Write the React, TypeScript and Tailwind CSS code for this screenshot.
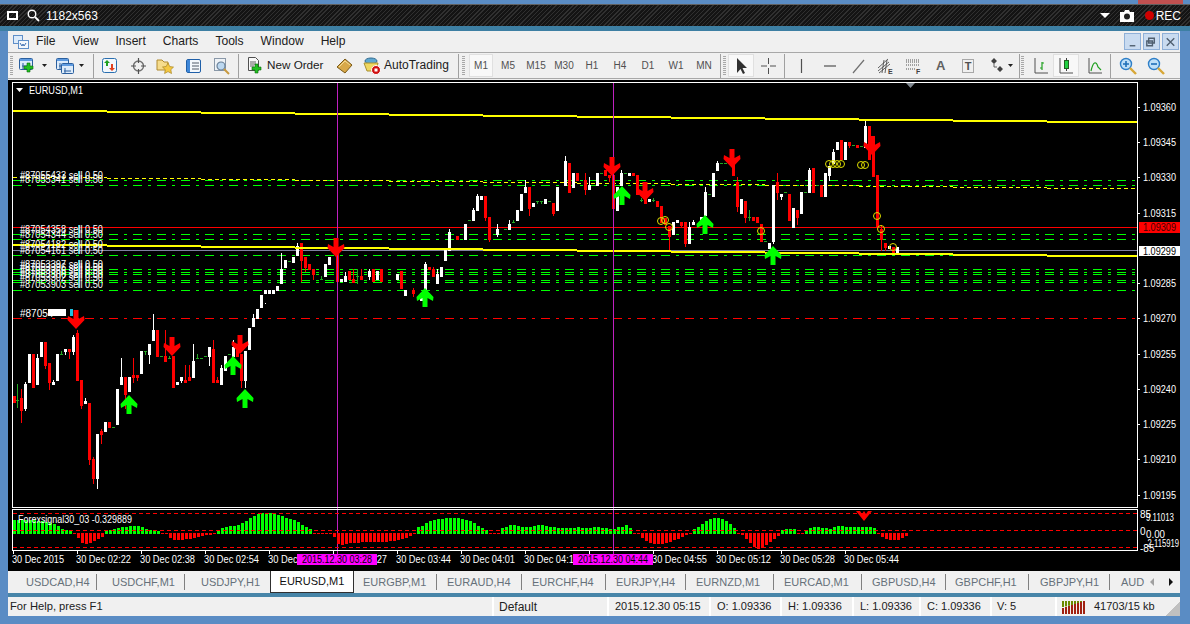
import type { ReactNode } from "react";

type Candle = [number, "w" | "r" | "g", number, number, number, number];

// zoomed coords per chart stretch: [x*3, colour, wickTop, bodyTop, bodyBottom, wickBottom]
const STRETCH_A: Candle[] = [
  [42, "r", 288, 288, 310, 310], [52, "g", 252, 301, 303, 325], [64, "r", 267, 294, 333, 369], [76, "w", 247, 252, 328, 332],
  [88, "w", 162, 162, 249, 249], [100, "r", 162, 162, 264, 264], [112, "w", 162, 174, 255, 255], [124, "w", 126, 126, 171, 171],
  [136, "r", 126, 126, 198, 207], [148, "r", 189, 189, 249, 270], [160, "w", 240, 246, 255, 255], [172, "w", 162, 162, 243, 243],
  [184, "g", 153, 163, 165, 165], [196, "w", 147, 147, 156, 165], [208, "r", 147, 147, 156, 177], [220, "w", 105, 111, 156, 165],
  [232, "r", 90, 99, 243, 243], [244, "r", 240, 240, 318, 327], [256, "w", 294, 303, 312, 312], [268, "r", 309, 309, 480, 495],
  [280, "r", 471, 477, 537, 552], [292, "w", 402, 402, 537, 567], [304, "r", 387, 393, 405, 432], [316, "w", 366, 366, 396, 396],
  [328, "r", 366, 366, 384, 384], [340, "g", 381, 381, 383, 383], [352, "w", 267, 267, 375, 375], [364, "w", 174, 231, 255, 255],
  [376, "r", 231, 231, 285, 327], [388, "w", 231, 231, 276, 276], [400, "r", 174, 225, 234, 249], [412, "r", 225, 225, 234, 243],
  [424, "w", 153, 153, 222, 222], [436, "g", 153, 153, 155, 165], [448, "w", 132, 132, 165, 192], [460, "w", 42, 90, 123, 123],
  [472, "r", 90, 90, 171, 171], [484, "g", 168, 168, 170, 170], [496, "r", 90, 168, 186, 186], [508, "g", 168, 175, 177, 177],
  [520, "r", 168, 168, 264, 264], [532, "w", 246, 246, 255, 255], [544, "w", 231, 231, 243, 249], [556, "r", 195, 240, 249, 249],
  [568, "r", 195, 231, 243, 243], [580, "w", 132, 183, 234, 234], [592, "g", 162, 175, 177, 177], [604, "g", 174, 174, 176, 176],
  [616, "g", 168, 168, 170, 170], [628, "w", 141, 141, 171, 198], [640, "r", 120, 147, 249, 249], [652, "r", 231, 240, 249, 249],
  [664, "w", 195, 204, 255, 255], [676, "w", 168, 168, 213, 213], [688, "g", 162, 162, 164, 164], [700, "w", 120, 141, 171, 171],
  [712, "r", 141, 141, 171, 171], [724, "r", 162, 162, 243, 264], [736, "w", 153, 153, 243, 264], [748, "w", 84, 84, 150, 150],
  [760, "w", 42, 54, 81, 81], [772, "w", 27, 27, 57, 57], [784, "w", -15, -15, 24, 24], [796, "w", 9, -30, -18, 9],
];

const STRETCH_B: Candle[] = [
  [808, "w", 570, 570, 582, 582], [820, "w", 570, 570, 582, 582], [832, "w", 558, 558, 573, 573], [844, "w", 460, 507, 552, 552],
  [856, "w", 480, 480, 505, 505], [868, "g", 483, 483, 485, 485], [880, "w", 471, 471, 489, 489], [892, "w", 430, 438, 468, 468],
  [904, "r", 429, 429, 483, 546], [916, "r", 471, 471, 504, 516], [928, "r", 492, 492, 509, 509], [940, "r", 507, 507, 525, 540],
  [964, "g", 528, 538, 540, 540], [976, "w", 492, 492, 531, 531], [988, "w", 471, 471, 495, 495], [1012, "r", 450, 450, 546, 546],
  [1024, "w", 537, 537, 546, 546], [1036, "w", 516, 528, 546, 546], [1048, "r", 513, 513, 540, 540], [1060, "r", 507, 537, 549, 549],
  [1072, "g", 507, 528, 530, 552], [1084, "r", 507, 528, 540, 540], [1108, "w", 507, 513, 531, 540], [1120, "r", 507, 507, 546, 546],
  [1132, "w", 513, 513, 540, 540], [1144, "r", 507, 507, 546, 546], [1192, "w", 522, 522, 540, 540],
];

const STRETCH_C: Candle[] = [
  [3, "r", 424, 424, 477, 477], [15, "w", 480, 480, 498, 498], [39, "r", 474, 480, 492, 500], [63, "w", 489, 489, 513, 513],
  [75, "w", 396, 402, 483, 483], [87, "r", 411, 411, 420, 420], [99, "r", 411, 417, 441, 441], [111, "w", 417, 432, 462, 462],
  [123, "w", 411, 411, 441, 441], [135, "w", 360, 360, 393, 393], [147, "w", 297, 306, 363, 363], [171, "r", 318, 318, 330, 330],
  [195, "w", 282, 282, 330, 330], [207, "g", 270, 270, 272, 272], [219, "w", 234, 240, 273, 273], [231, "w", 192, 198, 243, 243],
  [243, "w", 198, 198, 210, 210], [255, "r", 198, 198, 264, 273], [267, "r", 261, 261, 330, 336], [291, "w", 282, 297, 315, 321],
  [315, "g", 297, 297, 299, 299], [327, "w", 270, 282, 300, 300], [339, "g", 270, 277, 279, 279], [351, "w", 240, 240, 273, 273],
  [363, "w", 192, 192, 243, 243], [375, "w", 150, 171, 189, 189], [387, "r", 171, 171, 237, 258], [399, "w", 219, 219, 231, 231],
  [411, "g", 213, 213, 215, 222], [423, "g", 213, 213, 215, 222], [435, "w", 207, 207, 222, 222], [447, "g", 213, 213, 215, 215],
  [459, "r", 219, 219, 252, 258], [471, "w", 171, 171, 243, 243], [495, "w", 78, 93, 168, 168], [507, "r", 99, 99, 189, 189],
  [519, "w", 129, 129, 174, 174], [531, "r", 129, 129, 153, 153], [555, "r", 129, 150, 180, 195], [567, "w", 141, 165, 180, 180],
  [591, "w", 129, 129, 168, 168], [603, "g", 129, 129, 131, 131], [615, "r", 120, 120, 138, 138], [627, "r", 135, 135, 145, 156],
  [639, "r", 135, 135, 237, 258], [651, "w", 171, 171, 243, 243], [663, "w", 120, 129, 168, 168], [675, "g", 129, 129, 131, 131],
  [687, "w", 129, 129, 138, 138], [699, "r", 129, 129, 138, 138], [711, "r", 135, 135, 195, 195], [723, "g", 204, 210, 212, 216],
  [735, "r", 156, 156, 222, 222], [747, "w", 207, 207, 216, 216], [759, "g", 204, 210, 212, 216], [771, "r", 213, 213, 231, 231],
  [783, "r", 228, 228, 280, 280], [795, "r", 265, 265, 285, 285], [807, "r", 288, 288, 322, 363], [819, "w", 276, 276, 315, 315],
  [831, "w", 270, 270, 279, 279], [843, "r", 276, 276, 288, 291], [855, "r", 276, 276, 342, 351], [867, "w", 276, 291, 342, 342],
  [879, "w", 270, 276, 285, 285], [903, "w", 261, 261, 273, 273], [915, "w", 171, 186, 258, 258], [927, "g", 192, 192, 194, 194],
  [939, "w", 129, 129, 201, 201], [951, "w", 93, 99, 123, 123], [963, "g", 99, 99, 101, 101], [975, "g", 99, 99, 101, 101],
  [987, "g", 99, 99, 101, 101], [999, "r", 100, 100, 138, 138], [1011, "r", 141, 156, 231, 246], [1023, "w", 207, 207, 252, 252],
  [1035, "r", 213, 213, 264, 279], [1047, "g", 240, 260, 262, 273], [1059, "r", 261, 261, 273, 273], [1071, "r", 261, 261, 279, 279],
  [1083, "r", 282, 282, 336, 336], [1095, "g", 333, 333, 335, 335], [1107, "w", 339, 339, 357, 357], [1119, "w", 165, 165, 336, 342],
  [1131, "r", 129, 156, 189, 210], [1143, "w", 192, 192, 201, 210], [1155, "g", 186, 186, 188, 188], [1167, "r", 192, 192, 273, 273],
  [1179, "w", 234, 234, 294, 294], [1191, "r", 240, 240, 264, 285],
];

const STRETCH_D: Candle[] = [
  [9, "w", 324, 324, 384, 384], [21, "r", 330, 330, 354, 375], [33, "w", 276, 276, 342, 342], [45, "g", 276, 276, 278, 278],
  [57, "w", 204, 210, 279, 279], [69, "r", 204, 204, 279, 279], [81, "g", 255, 255, 257, 257], [93, "r", 255, 255, 291, 291],
  [105, "w", 219, 219, 291, 291], [117, "w", 198, 198, 228, 243], [129, "w", 147, 156, 192, 192], [141, "w", 126, 126, 150, 150],
  [153, "r", 120, 120, 180, 180], [165, "w", 126, 126, 180, 180], [177, "r", 126, 126, 138, 144], [189, "g", 135, 135, 137, 137],
  [201, "r", 135, 135, 144, 144], [213, "g", 138, 138, 140, 140], [225, "w", 60, 78, 144, 144], [237, "r", 78, 78, 180, 180],
  [249, "r", 108, 108, 231, 231], [261, "r", 225, 225, 381, 381], [273, "r", 375, 387, 420, 453], [285, "r", 429, 429, 444, 453],
  [297, "w", 438, 438, 447, 447], [309, "r", 441, 441, 462, 462], [321, "w", 441, 441, 462, 462],
];

const FILL = { w: "#ffffff", r: "#ff0000", g: "#22a822" };

const HIST = [
  11, 11, 11, 11, 11, 11, 10, 10, 9, 8, 7, 5, 2, 1, 0,
  -3, -8, -13, -14, -13, -11, -9, -7,
  0, 1, 2, 3, 4, 4, 5, 5, 5, 4, 2, 1, 0, 0,
  -1, -4, -8, -10, -10, -10, -9, -9, -8, -7, -6, -5, -5, -4,
  1, 3, 4, 5, 5, 6, 8, 10, 13, 15, 17, 18, 18, 18, 17, 16, 15, 13, 12, 11, 9, 6, 4, 2,
  -1, -1, -1, -1, -3, -7, -14, -15, -14, -13, -13, -13, -12, -12, -12, -12, -12, -12, -12, -11, -11, -10, -9, -8, -6, -4,
  4, 5, 8, 10, 11, 12, 12, 13, 13, 13, 13, 12, 11, 10, 8, 5, 3, 1,
  -1, -1, -1,
  3, 4, 6, 6, 5, 4, 4, 4, 5, 6, 6, 5, 4, 4, 3, 3, 3, 3, 3, 4, 3, 3, 3, 4, 4, 3, 3, 2, 2, 4, 4, 6, 3,
  -1, -4, -8, -11, -13, -14, -14, -14, -13, -12, -10, -9, -7, -5, -4,
  2, 4, 7, 10, 12, 13, 13, 12, 10, 7, 3,
  -2, -5, -9, -13, -17, -19, -18, -15, -12, -9, -6,
  1, 2, 2, 2, -1, -1,
  1, 3, 4, 4, 3, 3, 2, 4, 5, 5, 4, 4, 4, 4, 4, 4, 4, 3,
  -3, -7, -9, -10, -10, -10, -8, -6,
];

const GREEN_LINES = [180, 185, 234, 239, 250, 255, 269, 272, 274, 280, 282, 290];
const PRICES: [string, number][] = [
  ["1.09360", 107], ["1.09345", 142], ["1.09330", 177], ["1.09315", 213], ["1.09285", 283], ["1.09270", 318],
  ["1.09255", 354], ["1.09240", 389], ["1.09225", 424], ["1.09210", 459], ["1.09195", 495],
];
const ORDERS: [string, number][] = [
  ["#87055433", 175], ["#87055341", 179], ["#87054358", 229], ["#87054344", 234], ["#87054182", 244], ["#87054161", 250],
  ["#87053397", 264], ["#87053396", 267], ["#87053366", 270], ["#87053300", 274], ["#87053302", 277], ["#87053903", 284],
];
const TIMES: [string, number][] = [
  ["30 Dec 2015", 12], ["30 Dec 02:22", 76], ["30 Dec 02:38", 140], ["30 Dec 02:54", 204], ["30 Dec 03:11", 268],
  ["30 Dec 03:27", 332], ["30 Dec 03:44", 396], ["30 Dec 04:01", 460], ["30 Dec 04:18", 524], ["30 Dec 04:39", 588],
  ["30 Dec 04:55", 652], ["30 Dec 05:12", 716], ["30 Dec 05:28", 780], ["30 Dec 05:44", 844],
];
const DOWN: [number, number][] = [[76, 310], [172, 337], [240, 335], [336, 238], [612, 157], [645, 182], [732, 149], [872, 136]];
const UP: [number, number][] = [[129, 395], [233, 356], [245, 389], [425, 288], [622, 186], [705, 215], [773, 246]];
const RINGS: [number, number][] = [
  [661, 221], [665, 220], [669, 227], [761, 231], [829, 164], [833, 164], [837, 164], [841, 164],
  [861, 165], [865, 165], [877, 216], [881, 229], [893, 247],
];
const TABS: [string, string][] = [
  ["USDCAD,H4", "w-[87px] pl-[16px] border-r"],
  ["USDCHF,M1", "w-[88px] pl-[15px] border-r"],
  ["USDJPY,H1", "w-[85px] pl-[16px]"],
  ["EURGBP,M1", "w-[83px] pl-[9px] border-r"],
  ["EURAUD,H4", "w-[85px] pl-[10px] border-r"],
  ["EURCHF,H4", "w-[84px] pl-[10px] border-r"],
  ["EURJPY,H4", "w-[80px] pl-[10px] border-r"],
  ["EURNZD,M1", "w-[88px] pl-[10px] border-r"],
  ["EURCAD,M1", "w-[88px] pl-[10px] border-r"],
  ["GBPUSD,H4", "w-[84px] pl-[10px] border-r"],
  ["GBPCHF,H1", "w-[83px] pl-[9px] border-r"],
  ["GBPJPY,H1", "w-[81px] pl-[11px] border-r"],
];
const PERIODS = ["M5", "M15", "M30", "H1", "H4", "D1", "W1", "MN"];

function Candles({ rows, dx, dy }: { rows: Candle[]; dx: number; dy: number }) {
  return (
    <>
      {rows.map((c, i) => {
        const x = Math.round(dx + c[0] / 3 - 1.5);
        const y = (v: number) => Math.round(dy + v / 3);
        return (
          <g key={i} fill={FILL[c[1]]}>
            <rect x={x + 1} y={y(c[2])} width={1} height={Math.max(1, y(c[5]) - y(c[2]))} />
            <rect x={x} y={y(c[3])} width={3} height={Math.max(1, y(c[4]) - y(c[3]))} />
          </g>
        );
      })}
    </>
  );
}

function Steps({ y0, thick, color }: { y0: number; thick: number; color: string }) {
  return (
    <>
      {Array.from({ length: 12 }, (_, k) => {
        const x = 13 + 94 * k;
        return <rect key={k} x={x} y={y0 + k} width={Math.min(94, 1137 - x)} height={thick} fill={color} />;
      })}
    </>
  );
}

function Arrow({ x, y, down }: { x: number; y: number; down?: boolean }) {
  const s = down ? 1 : -1;
  const t = down ? y : y + 19;
  const p = (a: number, b: number) => `${x + a},${t + s * b}`;
  return (
    <polygon
      fill={down ? "#ff0000" : "#00ff00"}
      points={[p(-2.5, 0), p(2.5, 0), p(2.5, 9), p(8, 6), p(8.5, 10), p(0, 19), p(-8.5, 10), p(-8, 6), p(-2.5, 9)].join(" ")}
    />
  );
}

function ChartText({ x, y, children, len, fill = "#ffffff" }: { x: number; y: number; children: ReactNode; len?: number; fill?: string }) {
  return (
    <text x={x} y={y} fontSize={10} fill={fill} textLength={len} lengthAdjust={len ? "spacingAndGlyphs" : undefined} dominantBaseline="central">
      {children}
    </text>
  );
}

function Chart() {
  return (
    <svg viewBox="8 80 1172 491" className="block shrink-0 w-[1172px] h-[491px] bg-black" fontFamily="'Liberation Sans', sans-serif">
      <g shapeRendering="crispEdges">
        {GREEN_LINES.map((y) => (
          <line key={y} x1={13} x2={1137} y1={y + 0.5} y2={y + 0.5} stroke="#00ff00" strokeDasharray="9 6 3 6" />
        ))}
        <line x1={13} x2={1137} y1={227.5} y2={227.5} stroke="#ff0000" />
        <line x1={13} x2={1137} y1={250.5} y2={250.5} stroke="#8080a0" />
        <line x1={13} x2={1137} y1={318.5} y2={318.5} stroke="#ff0000" strokeDasharray="9 6 3 6" />
        {Array.from({ length: 12 }, (_, k) => (
          <line key={k} x1={13 + 94 * k} x2={Math.min(107 + 94 * k, 1137)} y1={177 + k} y2={177 + k} stroke="#ffff00" strokeDasharray="4 3" />
        ))}
        <Candles rows={STRETCH_A} dx={0} dy={300} />
        <Candles rows={STRETCH_B} dx={0} dy={100} />
        <Candles rows={STRETCH_C} dx={400} dy={130} />
        <Candles rows={STRETCH_D} dx={790} dy={100} />
        <Steps y0={110} thick={2} color="#ffff00" />
        <Steps y0={244} thick={2} color="#ffff00" />
        <line x1={337.5} x2={337.5} y1={83} y2={554} stroke="#c020c0" />
        <line x1={613.5} x2={613.5} y1={83} y2={554} stroke="#c020c0" />
      </g>

      {RINGS.map(([x, y], i) => (
        <circle key={i} cx={x} cy={y} r={3.5} fill="none" stroke="#e0e000" />
      ))}
      {DOWN.map(([x, y]) => <Arrow key={x} x={x} y={y} down />)}
      {UP.map(([x, y]) => <Arrow key={x} x={x} y={y} />)}

      {ORDERS.map(([id, y]) => (
        <g key={y}>
          <rect x={78} y={y - 4} width={1.5} height={8} fill="#20c0e0" />
          <ChartText x={20} y={y} len={83}>{id} sell 0.50</ChartText>
        </g>
      ))}
      <ChartText x={20} y={313}>#87054</ChartText>
      <rect x={48} y={309} width={18} height={7} fill="#ffffff" />
      <rect x={70} y={309} width={3} height={7} fill="#20c0e0" />

      <g shapeRendering="crispEdges" fill="none" stroke="#ffffff">
        <rect x={12.5} y={82.5} width={1125} height={425} />
        <rect x={12.5} y={509.5} width={1125} height={41} />
      </g>
      <polygon points="906,83 915,83 910.5,88" fill="#808890" />
      <polygon points="16,88 23,88 19.5,92" fill="#ffffff" />
      <ChartText x={29} y={90} len={54}>EURUSD,M1</ChartText>

      {PRICES.map(([p, y]) => (
        <g key={p}>
          <rect x={1137} y={y} width={3} height={1} fill="#ffffff" />
          <ChartText x={1143} y={y} len={33}>{p}</ChartText>
        </g>
      ))}
      <rect x={1139} y={222} width={41} height={11} fill="#ff0000" />
      <ChartText x={1143} y={227.5} len={33} fill="#400000">1.09309</ChartText>
      <rect x={1139} y={246} width={41} height={10} fill="#ffffff" />
      <ChartText x={1143} y={251} len={33} fill="#000000">1.09299</ChartText>

      <g shapeRendering="crispEdges">
        {HIST.map((h, i) => {
          const x = 13 + i * 4;
          return h >= 0 ? (
            <rect key={i} x={x} y={530.5 - h} width={3} height={h + 3} fill="#00ff00" />
          ) : (
            <rect key={i} x={x} y={533} width={3} height={Math.max(1, -h - 3)} fill="#ff0000" />
          );
        })}
        {[513.5, 530.5, 547.5].map((y) => (
          <line key={y} x1={13} x2={1137} y1={y} y2={y} stroke="#ff0000" strokeDasharray="4 3" />
        ))}
      </g>
      <polygon points="856,511 860,511 862,514 864,511 866,514 868,511 872,511 864,521" fill="#ff0000" />
      <ChartText x={18} y={519} len={114}>Forexsignal30_03 -0.329889</ChartText>
      <ChartText x={1140} y={514}>85</ChartText>
      <ChartText x={1146} y={517} len={28}>9.11013</ChartText>
      <ChartText x={1140} y={531}>0</ChartText>
      <ChartText x={1146} y={534} len={19}>0.00</ChartText>
      <ChartText x={1145} y={543} len={34}>-2.115919</ChartText>
      <ChartText x={1140} y={548}>-85</ChartText>

      <g shapeRendering="crispEdges" fill="#ffffff">
        {TIMES.map(([, x]) => <rect key={x} x={x + 1} y={551} width={1} height={3} />)}
      </g>
      {TIMES.map(([t, x]) => (
        <ChartText key={x} x={x} y={559} len={t.length === 11 ? 52 : 55}>{t}</ChartText>
      ))}
      <rect x={297} y={554} width={80} height={11} fill="#ff00ff" />
      <ChartText x={302} y={559.5} len={70} fill="#000000">2015.12.30 03:28</ChartText>
      <rect x={573} y={554} width={80} height={11} fill="#ff00ff" />
      <ChartText x={578} y={559.5} len={70} fill="#000000">2015.12.30 04:44</ChartText>
    </svg>
  );
}

/* toolbar icons */
const Ico = ({ children, w = 18 }: { children: ReactNode; w?: number }) => (
  <svg width={w} height={18} viewBox={`0 0 ${w} 18`} className="shrink-0 block">{children}</svg>
);

const Plus = ({ x, y }: { x: number; y: number }) => (
  <path d={`M${x} ${y}h3v3h3v3h-3v3h-3v-3h-3v-3h3z`} fill="#22c022" stroke="#0a6a0a" strokeWidth={0.6} />
);

const WinIco = ({ x, y, w, h }: { x: number; y: number; w: number; h: number }) => (
  <g>
    <rect x={x + 0.5} y={y + 0.5} width={w} height={h} rx={1} fill="#dcebfa" stroke="#2a5f9e" />
    <rect x={x + 1} y={y + 1} width={w - 1} height={2} fill="#5f9be0" />
    <path d={`M${x + 3} ${y + 8}h${w - 5}M${x + 4} ${y + 5}v6`} stroke="#2a5f9e" fill="none" />
  </g>
);

const NewChartIcon = () => <Ico><WinIco x={0} y={1} w={13} h={11} /><Plus x={8} y={6} /></Ico>;
const ProfileIcon = () => (
  <Ico><WinIco x={0} y={1} w={12} h={11} /><WinIco x={5} y={6} w={12} h={10} /></Ico>
);
const MarketIcon = () => (
  <Ico>
    <rect x={1.5} y={1.5} width={14} height={14} rx={2} fill="#f2f7fc" stroke="#2a6fb0" />
    <path d="M6 3l3 3H7v3H5V6H3z" fill="#20a020" />
    <path d="M11 14l-3-3h2V7h2v4h2z" fill="#e04020" />
  </Ico>
);
const TargetIcon = () => (
  <Ico>
    <circle cx={8.5} cy={9} r={5} fill="none" stroke="#707070" strokeWidth={1.4} />
    <path d="M8.5 1v5M8.5 12v5M1 9h5M11 9h5" stroke="#505050" strokeWidth={1.2} />
  </Ico>
);
const FolderStarIcon = () => (
  <Ico>
    <path d="M1 3h5l2 2h4v8H1z" fill="#f6dc8c" stroke="#b08a30" />
    <path d="M12 6l1.8 3.6 3.7.5-2.7 2.6.7 3.8-3.5-1.9-3.4 1.9.7-3.8L6.5 10l3.7-.5z" fill="#f4c842" stroke="#a88420" strokeWidth={0.7} />
  </Ico>
);
const TerminalIcon = () => (
  <Ico>
    <rect x={1.5} y={2.5} width={14} height={13} rx={1.5} fill="#f4f8fc" stroke="#1f5fa8" />
    <rect x={2} y={3} width={3} height={12} fill="#3f87d8" />
    <path d="M7 6h7M7 9h7M7 12h7" stroke="#505a68" />
  </Ico>
);
const TesterIcon = () => (
  <Ico>
    <rect x={1.5} y={1.5} width={11} height={12} fill="#eef2f6" stroke="#8a98a8" />
    <circle cx={8} cy={9} r={4} fill="#bcd8f0" stroke="#6a8098" strokeWidth={1.2} />
    <path d="M11 12l5 5" stroke="#c89a40" strokeWidth={2} />
  </Ico>
);
const NewOrderIcon = () => (
  <Ico>
    <path d="M1.5 .5h7l3 3v10h-10z" fill="#f8f8f8" stroke="#505050" />
    <path d="M3 5h6M3 7h6M3 9h4" stroke="#606060" />
    <Plus x={8} y={7} />
  </Ico>
);
const BookIcon = () => (
  <Ico>
    <path d="M1 10l8-8 7 6-7 8z" fill="#d8a848" stroke="#7a5a18" />
    <path d="M3 10l6-6 5 4" fill="none" stroke="#f4dc98" />
  </Ico>
);
const AutoIcon = () => (
  <Ico>
    <ellipse cx={8} cy={4} rx={6} ry={3} fill="#5fa8d0" stroke="#306a90" />
    <path d="M1 6h14l-2 8H4z" fill="#f0d860" stroke="#a89030" />
    <circle cx={13} cy={13} r={4.5} fill="#d01010" stroke="#ffffff" />
    <rect x={11.5} y={11.5} width={3} height={3} fill="#ffffff" />
  </Ico>
);
const CursorIcon = () => (
  <Ico><path d="M5 1v15l3.5-4 2.5 5 2-1-2.5-5H15z" fill="#303030" /></Ico>
);
const CrossIcon = () => <Ico><path d="M8.5 1v6M8.5 11v6M1 9h6M10 9h6" stroke="#505050" /></Ico>;
const VLineIcon = () => <Ico w={3}><path d="M1.5 2v14" stroke="#505050" strokeWidth={1.2} /></Ico>;
const HLineIcon = () => <Ico w={12}><path d="M0 9h12" stroke="#505050" strokeWidth={1.2} /></Ico>;
const DiagIcon = () => <Ico w={13}><path d="M1 16L12 3" stroke="#707070" strokeWidth={1.2} /></Ico>;
const ChannelIcon = () => (
  <Ico>
    <path d="M1 11L11 2M1 14L12 5M2 16L13 7M5 16L7 3M8 16L10 3" stroke="#505050" strokeWidth={0.9} fill="none" />
    <text x={11} y={17} fontSize={7} fontWeight={700} fill="#404040">E</text>
  </Ico>
);
const FibIcon = () => (
  <Ico>
    <path d="M1 3h13M1 5h13M1 8h13M1 12h9" stroke="#505050" strokeDasharray="1 1" />
    <text x={11} y={17} fontSize={7} fontWeight={700} fill="#404040">F</text>
  </Ico>
);
const TextBoxIcon = () => (
  <Ico w={14}>
    <rect x={1.5} y={2.5} width={11} height={13} fill="none" stroke="#606060" strokeDasharray="1 1" />
    <text x={7} y={13} fontSize={11} fontWeight={700} textAnchor="middle" fill="#505050">T</text>
  </Ico>
);
const SignsIcon = () => (
  <Ico w={14}>
    <path d="M4 1l3 3-3 3-3-3zM10 9l3 3-3 3-3-3z" fill="#404040" />
    <path d="M4 7v3h3" fill="none" stroke="#606060" />
  </Ico>
);
const Axes = () => <path d="M3 1v15h13" fill="none" stroke="#505050" />;
const BarsIcon = () => <Ico><Axes /><path d="M10 5v8M8 11h2M10 6h2" stroke="#20a020" strokeWidth={1.2} fill="none" /></Ico>;
const CandleIcon = () => (
  <Ico><Axes /><path d="M9.5 1v13" stroke="#404040" /><rect x={7.5} y={3.5} width={4} height={8} fill="#20d040" stroke="#206020" /></Ico>
);
const LineIcon = () => <Ico><Axes /><path d="M5 14c2-9 5-11 7-4l3 3" fill="none" stroke="#20a020" strokeWidth={1.2} /></Ico>;
const ZoomIcon = ({ minus }: { minus?: boolean }) => (
  <Ico>
    <circle cx={7} cy={7} r={5.5} fill="#bfe0f8" stroke="#2e7fc8" strokeWidth={1.4} />
    <path d={minus ? "M4 7h6" : "M4 7h6M7 4v6"} stroke="#1f6fb8" strokeWidth={1.6} />
    <path d="M11 11l6 6" stroke="#d8a838" strokeWidth={2.4} />
  </Ico>
);

const Grip = ({ className }: { className: string }) => (
  <div className={`w-[3px] h-[20px] shrink-0 bg-[repeating-linear-gradient(180deg,#a8a8a8_0px,#a8a8a8_1px,transparent_1px,transparent_2px)] ${className}`} />
);
const Sep = ({ className }: { className: string }) => <div className={`w-px h-[24px] shrink-0 bg-[#a0a0a0] ${className}`} />;
const Caret = ({ className }: { className: string }) => (
  <svg width={5} height={3} viewBox="0 0 5 3" className={`shrink-0 ${className}`}><path d="M0 0h5L2.5 3z" fill="#202020" /></svg>
);
const StatusCell = ({ className, children }: { className: string; children: ReactNode }) => (
  <div className={`h-full flex items-center shrink-0 border-r-2 border-white ${className}`}>{children}</div>
);

export default function App() {
  return (
    <div className="w-[1190px] h-[624px] overflow-hidden flex flex-col bg-[#5a8cc4] font-['Liberation_Sans',sans-serif] text-[12px] text-[#202020]">
      {/* capture overlay */}
      <div className="h-[4px] shrink-0 flex justify-end pr-[7px]">
        <div className="w-[45px] h-full bg-[#c05050]" />
      </div>
      <div className="h-[22px] shrink-0 flex items-center text-white border-t border-[#606060] bg-[repeating-linear-gradient(135deg,#303030_0px,#303030_1px,#141414_1px,#141414_3px)]">
        <div className="w-[11px] h-[9px] ml-[7px] border-2 border-white" />
        <svg width={13} height={13} viewBox="0 0 13 13" className="ml-[9px]">
          <circle cx={5} cy={5} r={3.8} fill="none" stroke="#ffffff" strokeWidth={1.4} />
          <path d="M8 8l4 4" stroke="#ffffff" strokeWidth={1.8} />
        </svg>
        <span className="ml-[6px] text-[12px]">1182x563</span>
        <svg width={10} height={5} viewBox="0 0 10 5" className="ml-auto"><path d="M0 0h10L5 5z" fill="#ffffff" /></svg>
        <svg width={14} height={12} viewBox="0 0 14 12" className="ml-[10px]">
          <path d="M0 2h4l1-2h4l1 2h4v10H0z" fill="#ffffff" />
          <circle cx={7} cy={6.5} r={3} fill="#202020" />
        </svg>
        <div className="w-[9px] h-[9px] rounded-full bg-[#d00000] ml-[11px]" />
        <span className="ml-[2px] mr-[9px] text-[12px]">REC</span>
      </div>
      <div className="h-[5px] shrink-0 bg-[#3d7fa3]" />

      <div className="h-[585px] shrink-0 ml-[8px] mr-[10px] flex flex-col">
        {/* menu */}
        <div className="h-[21px] shrink-0 bg-[#f0f0f0] flex items-center">
          <svg width={16} height={16} viewBox="0 0 16 16" className="ml-[5px]">
            <rect x={0.5} y={1.5} width={9} height={8} fill="#dcebfa" stroke="#5f8fc8" />
            <rect x={5.5} y={6.5} width={10} height={8} fill="#f4f8fc" stroke="#5f8fc8" />
            <path d="M7 9l2 3 1-2 1 2 2-3" fill="none" stroke="#3f6fb0" />
          </svg>
          <div className="flex gap-[17px] ml-[7px] text-[12.1px]">
            {["File", "View", "Insert", "Charts", "Tools", "Window", "Help"].map((m) => <span key={m}>{m}</span>)}
          </div>
          <div className="ml-auto flex gap-[2px] mr-[1px]">
            {["M5 12h6", "M5 4h6v5H5z M3 7h6v5H3z", "M4 4l8 8M12 4l-8 8"].map((d) => (
              <div key={d} className="w-[17px] h-[17px] bg-[#c9dbf0] border border-[#8fb0d8] flex items-center justify-center">
                <svg width={16} height={16} viewBox="0 0 16 16"><path d={d} fill="none" stroke="#506070" strokeWidth={1.5} /></svg>
              </div>
            ))}
          </div>
        </div>

        {/* toolbar */}
        <div className="h-[27px] shrink-0 bg-[#f0f0f0] border-t border-b border-[#a8a8a8] flex items-center">
          <Grip className="ml-[2px]" />
          <div className="ml-[6px]"><NewChartIcon /></div>
          <Caret className="ml-[5px]" />
          <div className="ml-[9px]"><ProfileIcon /></div>
          <Caret className="ml-[5px]" />
          <Sep className="ml-[9px]" />
          <div className="ml-[7px]"><MarketIcon /></div>
          <div className="ml-[11px]"><TargetIcon /></div>
          <div className="ml-[8px]"><FolderStarIcon /></div>
          <div className="ml-[11px]"><TerminalIcon /></div>
          <div className="ml-[10px]"><TesterIcon /></div>
          <Sep className="ml-[7px]" />
          <div className="ml-[8px]"><NewOrderIcon /></div>
          <span className="ml-[2px] w-[57px] text-[11.7px] whitespace-nowrap -translate-y-px">New Order</span>
          <div className="ml-[12px]"><BookIcon /></div>
          <div className="ml-[9px]"><AutoIcon /></div>
          <span className="ml-[3px] w-[67px] text-[12px] whitespace-nowrap -translate-y-px">AutoTrading</span>
          <Sep className="ml-[7px]" />
          <Grip className="ml-[3px]" />
          <div className="ml-[4px] w-[24px] h-[23px] bg-[#f8f8f8] border border-[#e0e0e0] flex items-center justify-center text-[10px] text-[#505050]">M1</div>
          <div className="flex ml-px">
            {PERIODS.map((p) => (
              <span key={p} className="w-[28px] text-center text-[10px] text-[#505050]">{p}</span>
            ))}
          </div>
          <Sep className="ml-[2px]" />
          <Grip className="ml-[2px]" />
          <div className="ml-[2px] w-[26px] h-[23px] bg-[#f8f8f8] border border-[#e0e0e0] flex items-center justify-center"><CursorIcon /></div>
          <div className="ml-[6px]"><CrossIcon /></div>
          <Sep className="ml-[6px]" />
          <div className="ml-[15px]"><VLineIcon /></div>
          <div className="ml-[21px]"><HLineIcon /></div>
          <div className="ml-[16px]"><DiagIcon /></div>
          <div className="ml-[12px]"><ChannelIcon /></div>
          <div className="ml-[10px]"><FibIcon /></div>
          <span className="ml-[13px] w-[10px] text-[13px] font-bold text-[#606060]">A</span>
          <div className="ml-[15px]"><TextBoxIcon /></div>
          <div className="ml-[15px]"><SignsIcon /></div>
          <Caret className="ml-[4px]" />
          <Sep className="ml-[6px]" />
          <Grip className="ml-[1px]" />
          <div className="ml-[8px]"><BarsIcon /></div>
          <div className="ml-[3px] w-[26px] h-[23px] bg-[#f8f8f8] border border-[#e0e0e0] flex items-center justify-center"><CandleIcon /></div>
          <div className="ml-[7px]"><LineIcon /></div>
          <Sep className="ml-[6px]" />
          <div className="ml-[8px]"><ZoomIcon /></div>
          <div className="ml-[10px]"><ZoomIcon minus /></div>
        </div>

        <div className="h-[1px] shrink-0 bg-[#f0f0f0]" />

        <Chart />

        {/* symbol tabs */}
        <div className="h-[22px] shrink-0 bg-[#f0f0f0] flex items-stretch pl-[2px] text-[11px] text-[#66707a] overflow-hidden relative">
          {TABS.slice(0, 3).map(([t, c]) => (
            <div key={t} className={`shrink-0 flex items-center my-[3px] border-[#808080] ${c}`}>{t}</div>
          ))}
          <div className="shrink-0 w-[84px] bg-white border-x border-b border-[#303030] flex items-center justify-center text-[#101010] -mt-[1px]">
            EURUSD,M1
          </div>
          {TABS.slice(3).map(([t, c]) => (
            <div key={t} className={`shrink-0 flex items-center my-[3px] border-[#808080] ${c}`}>{t}</div>
          ))}
          <span className="pl-[11px] self-center">AUD</span>
          <div className="absolute right-0 top-0 bottom-0 w-[36px] flex items-center justify-end gap-[15px] pr-[7px]">
            <svg width={4} height={8} viewBox="0 0 4 8"><path d="M4 0v8L0 4z" fill="#a0a0a0" /></svg>
            <svg width={4} height={8} viewBox="0 0 4 8"><path d="M0 0v8l4-4z" fill="#101010" /></svg>
          </div>
        </div>

        <div className="h-[4px] shrink-0 bg-[#4785a8]" />

        {/* status bar */}
        <div className="h-[19px] shrink-0 bg-[#f0f0f0] flex items-center text-[11px] text-[#202020]">
          <StatusCell className="w-[486px] pl-[2px] text-[11.2px]">For Help, press F1</StatusCell>
          <StatusCell className="w-[115px] pl-[5px] text-[12px]">Default</StatusCell>
          <StatusCell className="w-[102px] pl-[6px]">2015.12.30 05:15</StatusCell>
          <StatusCell className="w-[71px] pl-[6px]">O: 1.09336</StatusCell>
          <StatusCell className="w-[72px] pl-[6px]">H: 1.09336</StatusCell>
          <StatusCell className="w-[67px] pl-[6px]">L: 1.09336</StatusCell>
          <StatusCell className="w-[71px] pl-[6px]">C: 1.09336</StatusCell>
          <StatusCell className="w-[65px] pl-[5px]">V: 5</StatusCell>
          <svg width={24} height={14} viewBox="0 0 24 14" className="ml-[5px] shrink-0">
            {[0, 1, 2, 3, 4, 5, 6, 7].map((i) => (
              <g key={i}>
                <rect x={i * 3} y={1} width={2} height={6 - i * 0.6} fill="#6a8a00" />
                <rect x={i * 3} y={8 - i} width={2} height={6 + i} fill="#a02010" />
              </g>
            ))}
          </svg>
          <span className="ml-[8px]">41703/15 kb</span>
          <div className="ml-auto w-[14px] h-[14px] self-end bg-[linear-gradient(135deg,transparent_50%,#c0c0c0_50%)]" />
        </div>
      </div>
    </div>
  );
}
